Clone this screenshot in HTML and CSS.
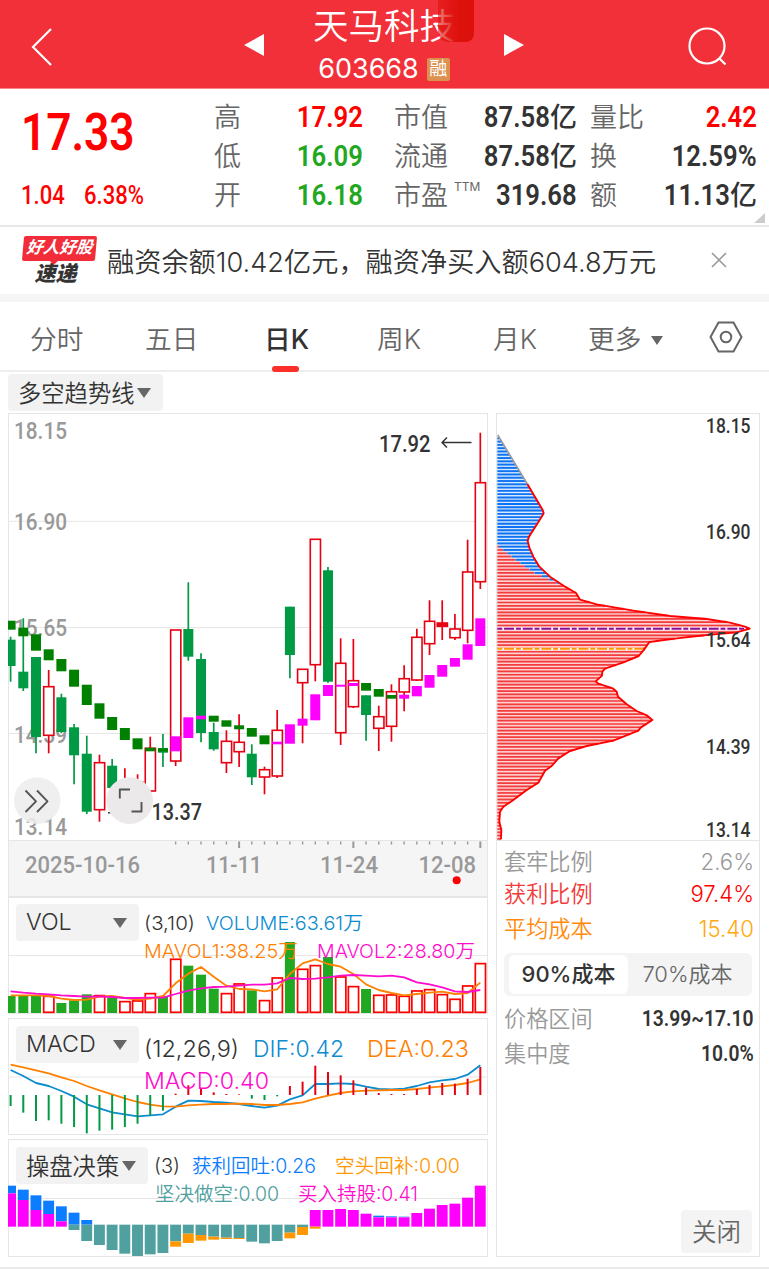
FILE: index.html
```html
<!DOCTYPE html>
<html lang="zh-CN">
<head>
    <meta charset="UTF-8">
    <meta name="viewport" content="width=device-width, initial-scale=1.0">
    <title>天马科技 603668</title>
    <link rel="stylesheet" href="styles.css">
</head>
<body>
    <header class="topbar">
        <svg class="back" width="24" height="40" viewBox="0 0 24 40"><path d="M21 2 L3 20 L21 38"/></svg>
        <svg class="prev" width="20" height="24" viewBox="0 0 20 24"><path d="M20 1 V23 L0 12 Z"/></svg>
        <div class="stock">
            <h1>天马科技</h1>
            <div class="code">603668 <span class="tag">融</span></div>
            <div class="smudge"></div>
        </div>
        <svg class="next" width="20" height="24" viewBox="0 0 20 24"><path d="M0 1 V23 L20 12 Z"/></svg>
        <svg class="search" width="42" height="42" viewBox="0 0 42 42"><circle cx="20" cy="20" r="17.5"/><path d="M32 32 L38.5 38.5"/></svg>
    </header>

    <section class="quote">
        <div class="price red">
            <div class="last"><span class="num">17.33</span></div>
            <div class="change"><span class="num">1.04</span><span class="num">6.38%</span></div>
        </div>
        <div class="stats">
            <div><label>高</label><b class="red"><span class="num">17.92</span></b></div>
            <div><label>市值</label><b><span class="num">87.58</span>亿</b></div>
            <div><label>量比</label><b class="red"><span class="num">2.42</span></b></div>
            <div><label>低</label><b class="green"><span class="num">16.09</span></b></div>
            <div><label>流通</label><b><span class="num">87.58</span>亿</b></div>
            <div><label>换</label><b><span class="num">12.59%</span></b></div>
            <div><label>开</label><b class="green"><span class="num">16.18</span></b></div>
            <div><label>市盈<sup>TTM</sup></label><b><span class="num">319.68</span></b></div>
            <div><label>额</label><b><span class="num">11.13</span>亿</b></div>
        </div>
        <i class="corner"></i>
    </section>

    <section class="news">
        <div class="logo"><span class="logo-top">好人好股</span><span class="logo-bottom">速递</span></div>
        <p>融资余额10.42亿元，融资净买入额604.8万元</p>
        <svg width="16" height="16" viewBox="0 0 16 16"><path d="M1 1 L15 15 M15 1 L1 15"/></svg>
    </section>

    <nav class="tabs">
        <span>分时</span>
        <span>五日</span>
        <span class="active">日K</span>
        <span>周K</span>
        <span>月K</span>
        <span>更多<i class="arrow small"></i></span>
        <svg width="34" height="32" viewBox="0 0 34 32"><path d="M9.5 1.5 H24.5 L32.5 16 L24.5 30.5 H9.5 L1.5 16 Z"/><circle cx="17" cy="16" r="5.3"/></svg>
    </nav>

    <div class="toolbar"><span class="select">多空趋势线<i class="arrow"></i></span></div>

    <main class="board">
        <div class="left">
            <div class="panel kline"><svg id="kline" viewBox="8 413 480 484"></svg></div>
            <div class="panel vol">
                <svg id="vol" viewBox="8 897 480 117"></svg>
                <span class="select wide">VOL<i class="arrow"></i></span>
            </div>
            <div class="panel macd">
                <svg id="macd" viewBox="8 1018 480 117"></svg>
                <span class="select wide">MACD<i class="arrow"></i></span>
            </div>
            <div class="panel decision">
                <svg id="decision" viewBox="8 1139 480 118"></svg>
                <span class="select">操盘决策<i class="arrow"></i></span>
            </div>
        </div>

        <aside class="chips">
            <svg id="chips" viewBox="496 413 264 428"></svg>
            <dl>
                <div class="grey"><dt>套牢比例</dt><dd>2.6%</dd></div>
                <div class="profit"><dt>获利比例</dt><dd>97.4%</dd></div>
                <div class="average"><dt>平均成本</dt><dd>15.40</dd></div>
            </dl>
            <div class="switch"><span class="on">90%成本</span><span>70%成本</span></div>
            <dl class="range">
                <div><dt>价格区间</dt><dd class="num">13.99~17.10</dd></div>
                <div><dt>集中度</dt><dd class="num">10.0%</dd></div>
            </dl>
            <button>关闭</button>
        </aside>
    </main>

    <script src="charts.js"></script>
</body>
</html>
```
FILE: styles.css
```css
* {
    box-sizing: border-box;
}
body {
    margin: 0;
    width: 769px;
    height: 1273px;
    overflow: hidden;
    background: #fff;
    color: #333;
    font-family: Inter, "Noto Sans CJK SC", sans-serif;
}
h1, p, dl, dd {
    margin: 0;
}
.red {
    color: #f00;
}
.green {
    color: #22a722;
}
.num {
    display: inline-block;
    font-family: Roboto, sans-serif;
    font-weight: 600;
    transform: scaleX(.87);
    transform-origin: right;
}

/* header */
.topbar {
    height: 89px;
    background: #f13039;
    border-bottom: 1px solid #f8868b;
    display: flex;
    align-items: center;
    padding: 0 40px 0 30px;
    color: #fff;
}
.topbar svg {
    fill: #fff;
    flex: none;
    margin-top: 2px;
}
.topbar .back,
.topbar .search {
    fill: none;
    stroke: #fff;
    stroke-width: 2.2;
    margin-top: 5px;
}
.back {
    margin-right: 190px;
}
.stock {
    position: relative;
    width: 240px;
    height: 88px;
    text-align: center;
}
.stock h1 {
    font-size: 35.5px;
    font-weight: 350;
    line-height: 52px;
    padding-top: 1px;
}
.code {
    font-size: 27px;
    line-height: 32px;
    display: flex;
    justify-content: center;
    align-items: center;
    gap: 8px;
}
.tag {
    width: 23px;
    height: 23px;
    line-height: 22px;
    font-size: 18px;
    background: #dc914e;
    border-radius: 2px;
}
.smudge {
    position: absolute;
    left: 174px;
    top: 0;
    width: 36px;
    height: 42px;
    border-radius: 0 0 8px 10px;
    background: linear-gradient(to right, rgba(221, 17, 12, .55), #dd110c 60%);
}
.topbar .search {
    margin-left: auto;
}

/* quote */
.quote {
    position: relative;
    height: 138px;
    display: flex;
    border-bottom: 2px solid #e8e8e8;
}
.price {
    width: 214px;
    flex: none;
    padding-left: 21px;
}
.price .num {
    transform-origin: left;
    transform: scaleX(.85);
    font-weight: 500;
}
.last {
    font-size: 52px;
    line-height: 60px;
    margin-top: 13px;
}
.price .last .num {
    font-weight: 600;
}
.change {
    font-size: 26px;
    line-height: 34px;
    margin-top: 15px;
    display: flex;
    gap: 11px;
}
.stats {
    display: grid;
    grid-template-columns: 149px 183px 167px;
    column-gap: 31px;
    grid-auto-rows: 39px;
    padding-top: 9px;
}
.stats > div:nth-child(3n) {
    margin-left: -18px;
    margin-right: 18px;
}
.stats > div {
    display: flex;
    justify-content: space-between;
    align-items: center;
    font-size: 27px;
    line-height: 39px;
    white-space: nowrap;
}
.stats label {
    color: #666;
    font-weight: 350;
}
.stats sup {
    font-size: 12px;
    line-height: 0;
    vertical-align: 14px;
    margin-left: 6px;
    font-weight: 400;
}
.stats b {
    font-weight: 500;
}
.stats .num {
    font-size: 29.5px;
}
.corner {
    position: absolute;
    right: 4px;
    bottom: 2px;
    border-left: 11px solid transparent;
    border-bottom: 10px solid #ccc;
}

/* news */
.news {
    height: 75px;
    border-bottom: 8px solid #f5f5f5;
    display: flex;
    align-items: center;
    padding: 0 42px 0 22px;
}
.news p {
    margin-left: 10px;
    margin-top: -2px;
    font-size: 27.2px;
    font-weight: 350;
    white-space: nowrap;
}
.news svg {
    margin-left: auto;
    margin-top: -1px;
    stroke: #999;
    stroke-width: 1.6;
}
.logo {
    width: 75px;
    display: flex;
    flex-direction: column;
    align-items: center;
    font-weight: 900;
    font-style: italic;
}
.logo-top {
    position: relative;
    width: 73px;
    height: 25px;
    line-height: 23px;
    font-size: 16.5px;
    font-weight: 700;
    text-align: center;
    color: #fff;
    background: #f22c39;
    border-radius: 2px;
    transform: skewX(-5deg);
}
.logo-top::after {
    content: "";
    position: absolute;
    left: 27px;
    top: 24px;
    border: 5px solid transparent;
    border-top-color: #f22c39;
    border-bottom: 0;
}
.logo-bottom {
    font-size: 21px;
    line-height: 25px;
    margin-left: -8px;
}

/* tabs */
.tabs {
    height: 70px;
    display: grid;
    grid-template-columns: 115px 119px 113px 116px 95px 121px 34px;
    align-items: center;
    padding: 0 0 0 30px;
    border-bottom: 2px solid #eee;
    color: #666;
    font-size: 26.7px;
    font-weight: 350;
}
.tabs span {
    position: relative;
    line-height: 68px;
    padding-top: 3px;
    white-space: nowrap;
}
.tabs .active {
    color: #333;
    font-weight: 500;
}
.tabs .active::after {
    content: "";
    position: absolute;
    left: 8px;
    bottom: 1px;
    width: 27px;
    height: 6px;
    border-radius: 3px;
    background: #fa3029;
}
.tabs svg {
    fill: none;
    stroke: #666;
    stroke-width: 2;
    margin-top: -2px;
}
.arrow {
    display: inline-block;
    border: 7px solid transparent;
    border-top: 10px solid #666;
    border-bottom: 0;
}
.arrow.small {
    border-width: 9px 6px 0;
    margin-left: 10px;
    vertical-align: 4px;
}

/* charts */
.toolbar {
    height: 41px;
    padding: 2px 8px;
}
.select {
    display: inline-flex;
    align-items: center;
    gap: 3px;
    height: 37px;
    padding: 0 12px 2px 10px;
    background: #f2f2f2;
    border-radius: 4px;
    font-size: 23.3px;
    font-weight: 350;
    white-space: nowrap;
}
.select .arrow {
    margin-top: 3px;
}
.select.wide {
    width: 123px;
    justify-content: space-between;
}
.board {
    display: flex;
    gap: 8px;
    padding: 0 8px;
    height: 856px;
    border-bottom: 2px solid #eaeaea;
}
.left {
    width: 480px;
}
.panel {
    position: relative;
}
.panel svg,
.chips svg {
    display: block;
    width: 100%;
}
.panel .select {
    position: absolute;
    left: 8px;
    top: 7px;
}
.panel.vol {
    margin-bottom: 4px;
}
.panel.macd {
    margin-bottom: 4px;
}
.panel.macd .select,
.panel.decision .select {
    top: 8px;
}
.chips {
    width: 264px;
    height: 844px;
    border-right: 1px solid #e6e6e6;
    border-left: 1px solid #e6e6e6;
    border-bottom: 1px solid #e6e6e6;
    display: flex;
    flex-direction: column;
}
.chips svg {
    width: 264px;
    margin-left: -1px;
}
.chips dl {
    padding: 3px 5px 0 7px;
    font-size: 22.2px;
    color: #999;
}
.chips dl div {
    display: flex;
    justify-content: space-between;
    align-items: center;
    height: 35px;
    font-weight: 350;
}
.chips dt {
    padding-bottom: 2px;
}
.chips dl .grey {
    height: 34px;
}
.chips dl .profit {
    height: 30px;
}
.chips dl .average {
    height: 40px;
}
.profit dt {
    color: #f23a3a;
}
.profit dd {
    color: #f00;
}
.average dt {
    color: #ff8a0c;
}
.average dd {
    color: #ffa90c;
}
.switch {
    display: flex;
    margin: 5px 7px 0;
    height: 43px;
    padding: 2px 5px;
    background: #f4f4f4;
    border-radius: 6px;
    font-size: 22px;
    line-height: 38px;
    font-weight: 350;
    color: #666;
}
.switch span {
    flex: 1;
    text-align: center;
}
.switch .on {
    background: #fff;
    border-radius: 6px;
    color: #333;
    font-weight: 500;
}
.chips .range {
    padding-top: 4px;
}
.chips .range .num {
    color: #333;
    font-weight: 600;
}
.chips button {
    margin: auto 7px 3px auto;
    width: 71px;
    height: 43px;
    padding: 0 0 2px;
    border: none;
    border-radius: 4px;
    background: #f4f4f4;
    color: #666;
    font: 350 24.5px Inter, "Noto Sans CJK SC", sans-serif;
}

/* svg text */
svg text {
    font-family: Inter, "Noto Sans CJK SC", sans-serif;
    font-weight: 350;
}
svg .din {
    font-family: Roboto, sans-serif;
    font-weight: 500;
}
```
FILE: charts.js
```js
const NS = 'http://www.w3.org/2000/svg';
const RED = '#e60012';
const GREEN = '#009944';
const STEP = 12.695;
const cx = i => 10.6 + i * STEP;

function add(parent, name, attrs, content) {
    const el = document.createElementNS(NS, name);
    for (const key in attrs) el.setAttribute(key, attrs[key]);
    if (content) el.textContent = content;
    parent.appendChild(el);
    return el;
}
function rect(svg, x, y, w, h, fill) {
    return add(svg, 'rect', { x, y, width: w, height: h, fill });
}
function line(svg, x1, y1, x2, y2, stroke, width) {
    return add(svg, 'line', { x1, y1, x2, y2, stroke, 'stroke-width': width || 1 });
}
function path(svg, d, stroke, width) {
    return add(svg, 'path', { d, stroke, fill: 'none', 'stroke-width': width, 'stroke-linejoin': 'round' });
}
// text fitted between x1 and x2
function label(svg, str, x1, x2, y, size, fill, din) {
    return add(svg, 'text', {
        x: x1, y, fill, 'font-size': size, class: din ? 'din' : '',
        textLength: x2 - x1, lengthAdjust: 'spacingAndGlyphs'
    }, str);
}
function frame(svg, x, y, w, h) {
    add(svg, 'rect', { x: x + .5, y: y + .5, width: w - 1, height: h - 1, fill: 'none', stroke: '#e6e6e6' });
}
function curve(svg, values, offset, stroke) {
    path(svg, 'M' + values.map((v, i) => cx(i) + ' ' + (offset + v / 3)).join('L'), stroke, 1.8);
}

/* ---------- k line ---------- */
// colour, high, body top, body bottom, low
const candles = [
    ['g', 636.7, 639.7, 666, 681.7], ['g', 618.3, 671.7, 688.3, 691], ['g', 657, 657, 737, 753.3],
    ['r', 670, 686.7, 735.3, 753.3], ['g', 693.7, 697.3, 732, 733], ['g', 724, 727.3, 755.3, 784.3],
    ['g', 735.7, 753.7, 811.7, 814], ['r', 754.7, 762.7, 809.7, 821.7], ['g', 759, 765.7, 788, 790],
    ['r', 768.3, 785, 800, 810], ['r', 774.3, 782, 800, 806], ['r', 736.7, 748.3, 791, 791],
    ['g', 734, 748, 752.7, 767], ['r', 630, 630, 761, 766], ['g', 582.3, 629, 656.7, 660.7],
    ['g', 653.3, 659, 733, 742.3], ['g', 722.7, 732, 749.3, 750.7], ['r', 730.3, 741.3, 762.7, 773],
    ['r', 714.3, 742.3, 751.7, 767], ['g', 744.3, 753.7, 777.3, 785], ['r', 766.7, 769.7, 777, 794.3],
    ['r', 710, 730.3, 776, 778], ['g', 606.7, 606.7, 655, 678.3], ['r', 669, 669.3, 682.7, 743.3],
    ['r', 539, 539.3, 664.7, 681.3], ['g', 567, 570.3, 681.7, 682.7], ['r', 638.3, 663.3, 732.7, 745],
    ['r', 639, 680.7, 706.7, 708], ['g', 695.3, 695.3, 715, 740.7], ['r', 705.7, 716.7, 728.3, 751],
    ['r', 684.3, 691.7, 726.3, 741.7], ['r', 665.3, 678.7, 692, 711.3], ['r', 628.7, 637.3, 680, 681],
    ['r', 600.3, 621.3, 643.7, 655], ['r', 600.3, 623, 626.3, 640], ['r', 614, 629, 637.7, 640],
    ['r', 539.7, 572, 630.3, 643.3], ['r', 432.7, 482.7, 581.7, 589]
];
// colour, top, bottom
const trend = [
    ['g', 620.7, 629.7], ['g', 627.7, 636.3], ['g', 634.3, 650.7], ['g', 649.3, 660.3], ['g', 659, 671.3],
    ['g', 669.7, 686.7], ['g', 684.7, 705], ['g', 703.3, 718.7], ['g', 717, 730], ['g', 728, 740],
    ['g', 738.3, 749.3], ['g', 747.7, 751.3], ['g', 748.3, 751.5], ['m', 736.3, 751.3], ['m', 717.3, 738],
    ['m', 715.7, 719.3], ['g', 715.7, 721.7], ['g', 720.3, 726.7], ['g', 725.3, 729.3], ['g', 728, 736.7],
    ['g', 735.3, 744.3], ['m', 741.7, 744.3], ['m', 724.3, 743.7], ['m', 718.7, 725.7], ['m', 694.3, 720.3],
    ['m', 685, 696], ['m', 684.7, 686.7], ['m', 683, 686], ['g', 683, 690.7], ['g', 689, 696.7],
    ['g', 695, 698.7], ['m', 694.7, 698.7], ['m', 686, 696.3], ['m', 675, 687.7], ['m', 665, 676.7],
    ['m', 658, 666.7], ['m', 644.3, 659.7], ['m', 618.3, 646]
];

const kline = document.getElementById('kline');
rect(kline, 8, 840, 480, 57, '#f5f5f5');
frame(kline, 8, 413, 480, 484);
[521.3, 627.5, 733.5, 840.5].forEach(y => line(kline, 8, y, 488, y, '#e6e6e6'));
[['18.15', 438.6], ['16.90', 530.3], ['15.65', 636.3], ['14.39', 742.6], ['13.14', 834.6]].forEach(([t, y]) =>
    label(kline, t, 14, 67, y, 24, '#999', true));

candles.forEach(([color, high, top, bottom, low], i) => {
    const x = cx(i);
    if (color === 'g') {
        line(kline, x, high, x, low, GREEN, 1.7);
        const left = Math.max(8, x - 5);
        rect(kline, left, top, x + 5 - left, bottom - top, GREEN);
    } else {
        line(kline, x, high, x, top, RED, 1.7);
        line(kline, x, bottom, x, low, RED, 1.7);
        add(kline, 'rect', {
            x: x - 5, y: top, width: 10.2, height: bottom - top,
            fill: bottom - top < 4 ? RED : '#fff', stroke: RED, 'stroke-width': 1.6
        });
    }
});
trend.forEach(([color, top, bottom], i) => {
    const left = Math.max(8, cx(i) - 5);
    rect(kline, left, top, cx(i) + 5 - left, bottom - top, color === 'g' ? '#008000' : '#f0f');
});

label(kline, '17.92', 379, 430.5, 451.5, 23, '#333', true);
path(kline, 'M471.5 442.5H443M447 437.5L442 442.5L447 447.5', '#333', 1.5);
rect(kline, 108, 812, 3, 1.5, '#333');
label(kline, '13.37', 151.5, 202, 819.5, 23, '#333', true);

for (let i = 13; i < 38; i++) {
    const big = i === 18 || i === 27 || i === 37;
    line(kline, cx(i), 841.5, cx(i), big ? 848 : 844.5, '#999', big ? 2 : 1.4);
}
label(kline, '2025-10-16', 25, 140, 872.5, 23.5, '#999', true);
label(kline, '11-11', 206, 262, 872.5, 23.5, '#999', true);
label(kline, '11-24', 320, 378, 872.5, 23.5, '#999', true);
label(kline, '12-08', 418.5, 476, 872.5, 23.5, '#999', true);
add(kline, 'circle', { cx: 456.7, cy: 880.2, r: 4, fill: '#f00' });

// floating buttons
add(kline, 'circle', { cx: 37.2, cy: 800.6, r: 23.3, fill: '#ededed', 'fill-opacity': .88 });
path(kline, 'M25.5 790.5L36 801.3L25.5 812M37 790.5L47.5 801.3L37 812', '#555', 1.9);
add(kline, 'circle', { cx: 129.7, cy: 800.6, r: 23.3, fill: '#ebe9ea' });
path(kline, 'M119.8 798.5V789.5H130M131.5 811.5H141.5V802', '#555', 1.9);

/* ---------- volume ---------- */
const volumes = [
    ['g', 303], ['g', 303], ['g', 303], ['r', 303], ['g', 324], ['g', 316], ['g', 298], ['r', 301], ['g', 308],
    ['r', 319], ['r', 317], ['r', 295], ['g', 303], ['r', 192], ['g', 212], ['g', 239], ['g', 281], ['r', 295],
    ['r', 266], ['g', 286], ['r', 316], ['r', 248], ['g', 141], ['r', 222], ['r', 211], ['g', 186], ['r', 245],
    ['r', 274], ['g', 282], ['r', 300], ['r', 299], ['r', 303], ['r', 287], ['r', 283], ['r', 298], ['r', 312],
    ['r', 272], ['r', 205]
];
const mavol1 = [301, 301, 301, 303, 311, 315, 314, 305, 303, 309, 314, 311, 303, 265, 236, 216, 245, 272, 282, 283,
    289, 283, 237, 205, 193, 207, 215, 237, 268, 285, 294, 301, 297, 293, 290, 297, 294, 263];
const mavol2 = [289, 293, 296, 298, 301, 303, 305, 304, 306, 309, 309, 308, 308, 297, 287, 280, 276, 275, 272, 269,
    269, 265, 249, 252, 251, 247, 242, 240, 242, 244, 242, 247, 262, 268, 277, 289, 291, 285];

const vol = document.getElementById('vol');
frame(vol, 8, 897, 480, 117);
line(vol, 8, 955.5, 488, 955.5, '#e6e6e6');
volumes.forEach(([color, v], i) => {
    const y = 895 + v / 3;
    if (color === 'g') {
        const left = Math.max(8, cx(i) - 5);
        rect(vol, left, y, cx(i) + 5 - left, 1013 - y, '#22a722');
    } else {
        add(vol, 'rect', {
            x: cx(i) - 5, y: y + .3, width: 10.2, height: 1012 - y, fill: '#fff', stroke: '#f00', 'stroke-width': 1.7
        });
    }
});
curve(vol, mavol1, 895, '#ff8000');
curve(vol, mavol2, 895, '#ff0ccd');
label(vol, '(3,10)', 144, 195, 930.3, 19, '#333');
label(vol, 'VOLUME:63.61万', 206, 363, 930.3, 19, '#0c8ccf');
label(vol, 'MAVOL1:38.25万', 144, 298, 957.6, 19, '#ff8000');
label(vol, 'MAVOL2:28.80万', 317, 475, 957.6, 19, '#ff0ccd');

/* ---------- macd ---------- */
const dif = [525, 543, 564, 573, 588, 605, 628, 640, 652, 658, 664, 661, 658, 635, 617, 618, 621, 623, 627, 633,
    638, 632, 613, 601, 567, 567, 565, 567, 575, 582, 583, 581, 573, 562, 556, 552, 539, 511];
const dea = [509, 517, 526, 535, 547, 558, 573, 586, 598, 610, 621, 629, 634, 635, 631, 629, 627, 627, 626, 627,
    630, 630, 627, 622, 611, 602, 594, 589, 587, 586, 585, 585, 582, 578, 574, 570, 564, 553];
const bars = [633, 653, 678, 676, 686, 696, 715, 707, 704, 696, 686, 661, 647, 596, 571, 581, 592, 597, 598, 611,
    615, 604, 573, 560, 512, 531, 541, 556, 577, 594, 597, 597, 582, 570, 564, 566, 551, 516];

const macd = document.getElementById('macd');
frame(macd, 8, 1018, 480, 117);
line(macd, 8, 1077, 488, 1077, '#e6e6e6');
curve(macd, dif, 895, '#0c8ccf');
curve(macd, dea, 895, '#ff8000');
bars.forEach((v, i) => line(macd, cx(i), 1095, cx(i), 895 + v / 3, v > 600 ? GREEN : RED, 2));
label(macd, '(12,26,9)', 144, 239, 1056.6, 22.5, '#333');
label(macd, 'DIF:0.42', 253, 344, 1056.6, 22.5, '#0c8ccf');
label(macd, 'DEA:0.23', 367, 469, 1056.6, 22.5, '#ff8000');
label(macd, 'MACD:0.40', 144, 269, 1089, 22.5, '#ff0ccd');

/* ---------- decision ---------- */
const BLUE = '#0c7dff';
const TEAL = '#50a0a0';
const ORANGE = '#ff9800';
// stacked pieces: colour, top, bottom
const m = '#f0f';
const stacks = [
    [[BLUE, 167, 190], [m, 190, 290]], [[BLUE, 179, 210], [m, 210, 290]], [[BLUE, 196, 240], [m, 240, 290]],
    [[BLUE, 212, 252], [m, 252, 290]], [[BLUE, 229, 274], [m, 274, 290]], [[BLUE, 248, 284], [TEAL, 284, 300]],
    [[BLUE, 270, 284], [TEAL, 284, 333]], [[TEAL, 284, 345]], [[TEAL, 284, 360]], [[TEAL, 284, 371]],
    [[TEAL, 284, 378]], [[TEAL, 284, 373]], [[TEAL, 284, 369]], [[TEAL, 284, 334], [ORANGE, 334, 350]],
    [[TEAL, 284, 311], [ORANGE, 311, 339]], [[TEAL, 284, 315], [ORANGE, 315, 332]],
    [[TEAL, 284, 320], [ORANGE, 320, 329]], [[TEAL, 284, 323], [ORANGE, 323, 327]],
    [[TEAL, 284, 324], [ORANGE, 324, 327]], [[TEAL, 284, 335]], [[TEAL, 284, 340]], [[TEAL, 284, 333]],
    [[TEAL, 284, 308], [ORANGE, 308, 325]], [[TEAL, 284, 291], [ORANGE, 291, 315]],
    [[m, 240, 290], [ORANGE, 290, 296]], [[m, 240, 290]], [[m, 237, 290]], [[m, 240, 290]], [[m, 251, 290]],
    [[BLUE, 257, 262], [m, 262, 290]], [[BLUE, 259, 262], [m, 262, 290]], [[BLUE, 260, 262], [m, 262, 290]],
    [[m, 249, 290]], [[m, 236, 290]], [[m, 225, 290]], [[m, 221, 290]], [[m, 203, 290]], [[m, 167, 290]]
];

const decision = document.getElementById('decision');
frame(decision, 8, 1139, 480, 118);
line(decision, 8, 1198.5, 488, 1198.5, '#e6e6e6');
stacks.forEach((stack, i) => stack.forEach(([fill, top, bottom]) => {
    const left = Math.max(8, cx(i) - 5.5);
    rect(decision, left, 1130 + top / 3, cx(i) + 5.4 - left, (bottom - top) / 3, fill);
}));
label(decision, '(3)', 154, 180, 1173.2, 19.5, '#333');
label(decision, '获利回吐:0.26', 192, 316, 1173.2, 19.5, BLUE);
label(decision, '空头回补:0.00', 335, 460, 1173.2, 19.5, ORANGE);
label(decision, '坚决做空:0.00', 155, 279, 1200.8, 19.5, TEAL);
label(decision, '买入持股:0.41', 298, 418, 1200.8, 19.5, '#ff0ccd');

/* ---------- cost distribution ---------- */
const outline = [[112, 222], [158, 300], [161, 310], [155, 320], [117, 380], [113, 392], [118, 413], [130, 440],
    [148, 470], [180, 500], [225, 530], [258, 549], [270, 569], [320, 583], [430, 602], [540, 618], [650, 627],
    [720, 638], [765, 650], [779, 656], [740, 667], [650, 675], [560, 685], [478, 696], [463, 718], [446, 738],
    [400, 757], [345, 776], [337, 785], [336, 797], [317, 814], [325, 821], [368, 835], [380, 845], [384, 860],
    [410, 883], [440, 903], [470, 916], [487, 930], [452, 953], [445, 962], [400, 980], [370, 992], [290, 1008],
    [240, 1023], [205, 1045], [185, 1068], [165, 1082], [145, 1118], [110, 1140], [70, 1170], [40, 1190],
    [30, 1205], [28, 1235], [34, 1260], [33, 1288]];
const split = [[22, 406], [75, 448], [130, 487], [225, 530]];

// width of the shape at height y
function widthAt(points, y) {
    for (let i = 1; i < points.length; i++) {
        const [x0, y0] = points[i - 1];
        const [x1, y1] = points[i];
        if (y >= y0 && y <= y1) return x0 + (x1 - x0) * (y - y0) / (y1 - y0);
    }
    return null;
}

const chips = document.getElementById('chips');
const px = v => 490 + v / 3;
const py = v => 410 + v / 3;
line(chips, 496, 413.5, 760, 413.5, '#e6e6e6');
line(chips, 496, 840.5, 760, 840.5, '#e6e6e6');
const shape = [[23, 75]].concat(outline);
for (let y = 85; y < 1288; y += 9.85) {
    const right = widthAt(shape, y);
    if (right === null) continue;
    const edge = y < 406 ? 22 : (widthAt(split, y) || right);
    if (edge > 22) {
        line(chips, px(22), py(y), px(edge), py(y), '#fcc8c8', 3.3);
        line(chips, px(22), py(y), px(edge), py(y), '#f43c3c', 1.7);
    }
    if (right > edge) {
        line(chips, px(edge), py(y), px(right), py(y), '#cfe2fb', 3.3);
        line(chips, px(edge), py(y), px(right), py(y), '#0c73f4', 1.9);
    }
}
line(chips, 497.3, 628.8, 749, 628.8, '#fff', 2.4);
line(chips, 497.3, 628.8, 749, 628.8, '#8b0c99', 2).setAttribute('stroke-dasharray', '5 1.8 10 1.8');
line(chips, 497.3, 648.8, 643, 648.8, '#fff', 2.8);
line(chips, 497.3, 648.8, 643, 648.8, '#ff9800', 2).setAttribute('stroke-dasharray', '5 1.8 10 1.8');
path(chips, 'M' + outline.map(p => px(p[0]) + ' ' + py(p[1])).join('L'), '#f00', 1.9);
path(chips, 'M497.7 435L527.3 484', '#999', 1.6);
[['18.15', 432.6], ['16.90', 539], ['15.64', 647], ['14.39', 753.6], ['13.14', 836.6]].forEach(([t, y]) =>
    label(chips, t, 706, 750.5, y, 20, '#333', true));
```
